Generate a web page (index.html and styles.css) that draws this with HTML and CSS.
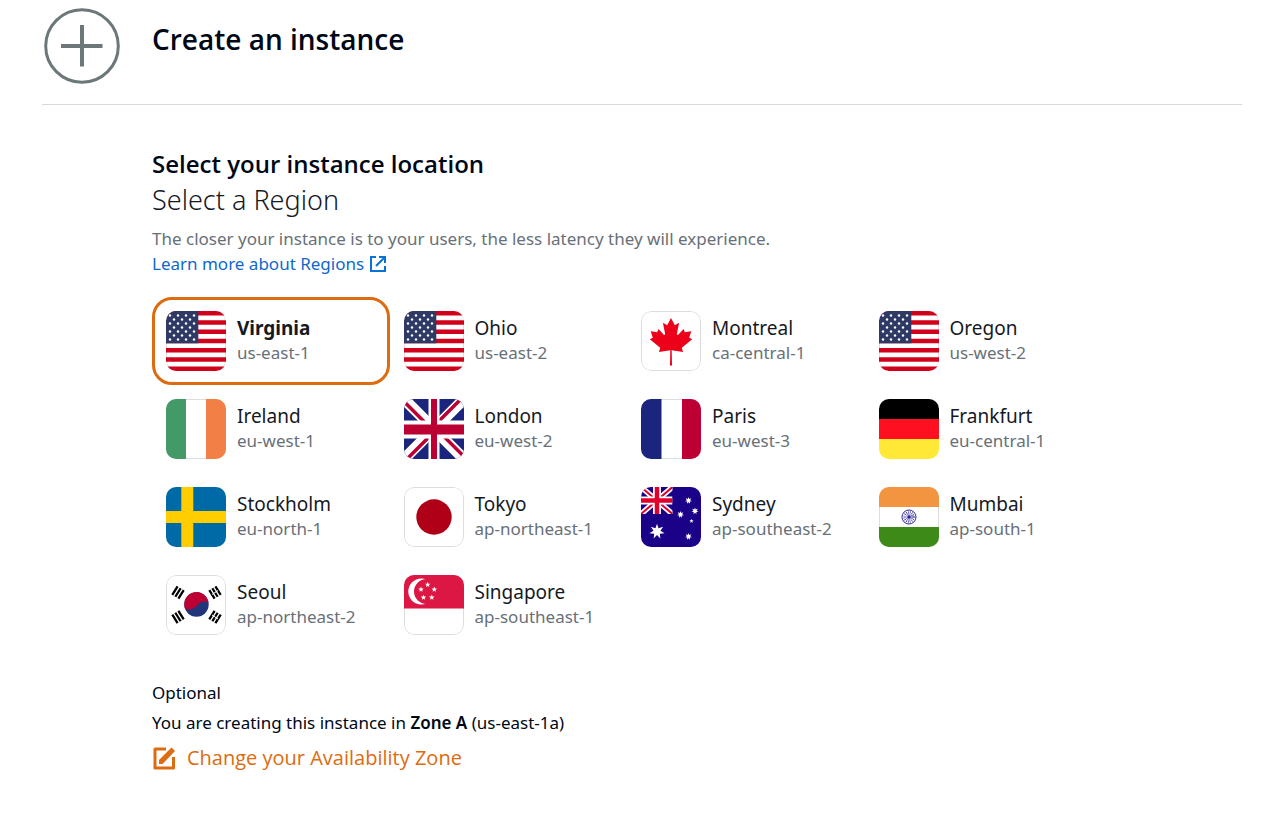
FILE: index.html
```
<!DOCTYPE html>
<html lang="en">
<head>
<meta charset="utf-8">
<meta name="viewport" content="width=device-width, initial-scale=1">
<title>Create an instance</title>
<link rel="stylesheet" href="styles.css">
</head>
<body>
<svg class="defs" aria-hidden="true">
  <defs>
    <pattern id="stars" x="2" y="2" width="8" height="8" patternUnits="userSpaceOnUse">
      <circle cx="2" cy="2.5" r="1.2" fill="#fff"/><circle cx="6" cy="6.5" r="1.2" fill="#fff"/>
    </pattern>
    <polygon id="star5" points="0,-1 .25,-.32 .95,-.31 .4,.13 .59,.81 0,.42 -.59,.81 -.4,.13 -.95,-.31 -.25,-.32"/>
    <polygon id="star7" points="0,-1 .2,-.42 .78,-.62 .45,-.1 .97,.22 .36,.28 .43,.9 0,.46 -.43,.9 -.36,.28 -.97,.22 -.45,-.1 -.78,-.62 -.2,-.42"/>
    <g id="bars"><path d="M-3.6-5V5M0-5V5M3.6-5V5" stroke="#000" stroke-width="2.3"/></g>
    <rect id="blank" x=".5" y=".5" width="59" height="59" rx="9.5" fill="#fff" stroke="#ddd"/>
  </defs>
  <symbol id="us" viewBox="0 0 60 60">
    <use href="#blank"/>
    <path d="M0 2.3H60M0 11.5H60M0 20.8H60M0 30H60M0 39.3H60M0 48.5H60M0 57.7H60" stroke="#d0021b" stroke-width="4.6"/>
    <rect width="32.3" height="32.3" fill="#2e3a65"/>
    <rect x="2" y="2" width="28" height="28" fill="url(#stars)"/>
  </symbol>
  <symbol id="ca" viewBox="0 0 60 60">
    <use href="#blank"/>
    <path fill="#ed0019" d="M30 7l-3.8 7.3-4.3-2.5 2.3 11.5-1.2.6-5.5-5.8-1.4 3.1-6.4-1 2.1 6.5-3 1.6 10.4 8.5-1.2 4.3 11.3-1.8-.3 15.3h2l-.3-15.3 11.3 1.8-1.2-4.3 10.4-8.5-3-1.6 2.1-6.5-6.4 1-1.4-3.1-5.5 5.8-1.2-.6 2.3-11.5-4.3 2.5z"/>
  </symbol>
  <symbol id="ie" viewBox="0 0 60 60">
    <use href="#blank"/><rect width="20" height="60" fill="#439a66"/><rect x="40" width="20" height="60" fill="#f17f46"/>
  </symbol>
  <symbol id="gb" viewBox="0 0 60 60">
    <rect width="60" height="60" fill="#1b257d"/>
    <path d="M0 0L60 60M60 0L0 60" stroke="#fff" stroke-width="11"/>
    <path d="M-1 1.5L29 31.500M58 -1L29 28M31 28.500L61 58.500M31 32L2 61" stroke="#bd0034" stroke-width="3.500"/>
    <path d="M30 0V60" stroke="#fff" stroke-width="11"/><path d="M0 30.500H60" stroke="#fff" stroke-width="18"/>
    <path d="M30 0V60" stroke="#bd0034" stroke-width="6"/><path d="M0 30.500H60" stroke="#bd0034" stroke-width="10"/>
  </symbol>
  <symbol id="fr" viewBox="0 0 60 60">
    <use href="#blank"/><rect width="20.500" height="60" fill="#1b257d"/><rect x="41" width="19" height="60" fill="#bd0034"/>
  </symbol>
  <symbol id="de" viewBox="0 0 60 60">
    <rect width="60" height="20" fill="#000"/><rect y="20" width="60" height="20" fill="#ff1020"/><rect y="40" width="60" height="20" fill="#ffe936"/>
  </symbol>
  <symbol id="se" viewBox="0 0 60 60">
    <rect width="60" height="60" fill="#006aa7"/><path d="M21.300 0V60M0 30H60" stroke="#ffcd00" stroke-width="12"/>
  </symbol>
  <symbol id="jp" viewBox="0 0 60 60">
    <use href="#blank"/><circle cx="30" cy="30" r="17.700" fill="#b00017"/>
  </symbol>
  <symbol id="au" viewBox="0 0 60 60">
    <rect width="60" height="60" fill="#1b0088"/>
    <svg width="31.500" height="27" viewBox="0 0 31.500 27">
      <path d="M0 0L31.500 27M31.500 0L0 27" stroke="#fff" stroke-width="5.500"/>
      <path d="M0 0L31.500 27M31.500 0L0 27" stroke="#e0002b" stroke-width="2"/>
      <path d="M16 0V27M0 13.500H31.500" stroke="#fff" stroke-width="8"/>
      <path d="M16 0V27M0 13.500H31.500" stroke="#e0002b" stroke-width="4.500"/>
    </svg>
    <g fill="#fff">
      <use href="#star7" transform="translate(16 44.500) scale(7.800)"/>
      <use href="#star7" transform="translate(47.500 13.500) scale(3.600)"/>
      <use href="#star7" transform="translate(54 24) scale(3.600)"/>
      <use href="#star7" transform="translate(39.500 27.500) scale(3.600)"/>
      <use href="#star5" transform="translate(50.500 34) scale(2.200)"/>
      <use href="#star7" transform="translate(47.500 49.500) scale(3.600)"/>
    </g>
  </symbol>
  <symbol id="in" viewBox="0 0 60 60">
    <use href="#blank"/><rect width="60" height="20" fill="#f29440"/><rect y="40" width="60" height="20" fill="#3d8a18"/>
    <g fill="none" stroke="#2d2593">
      <circle cx="30" cy="30" r="7"/>
      <circle cx="30" cy="30" r="3.500" stroke-width="4.500" stroke-dasharray=".5 .9"/>
    </g>
    <circle cx="30" cy="30" r="1.700" fill="#2d2593"/>
  </symbol>
  <symbol id="kr" viewBox="0 0 60 60">
    <use href="#blank"/>
    <circle cx="30.500" cy="29.500" r="12.200" fill="#20357a"/>
    <path fill="#bd0034" d="M19.300 34.200A12.200 12.200 0 1 1 42.500 27.500C38 25.500 34.500 26.500 31.500 30C28.500 34 23.500 35 19.300 34.200z"/>
    <use href="#bars" transform="translate(12 17.500) rotate(32)"/>
    <use href="#bars" transform="translate(49 17.500) rotate(-32)"/>
    <use href="#bars" transform="translate(12 42) rotate(-32)"/>
    <use href="#bars" transform="translate(49 42) rotate(32)"/>
    <path d="M46 19.500l6-4M46 40l6 4" stroke="#fff" stroke-width="1" fill="none"/>
  </symbol>
  <symbol id="sg" viewBox="0 0 60 60">
    <use href="#blank"/><rect width="60" height="33.500" fill="#dc1743"/>
    <circle cx="17.300" cy="16.500" r="13" fill="#fff"/><circle cx="22.500" cy="16.500" r="12.500" fill="#dc1743"/>
    <g fill="#fff">
      <use href="#star5" transform="translate(23.700 9.700) scale(2.900)"/>
      <use href="#star5" transform="translate(17 14.500) scale(2.900)"/>
      <use href="#star5" transform="translate(30.300 14.500) scale(2.900)"/>
      <use href="#star5" transform="translate(19.500 22.500) scale(2.900)"/>
      <use href="#star5" transform="translate(27.800 22.500) scale(2.900)"/>
    </g>
  </symbol>
</svg>

<div class="page">
  <header class="header">
    <svg class="plus" viewBox="0 0 76 76" aria-hidden="true"><circle cx="38" cy="38" r="36.300"/><path d="M38 17V58.500M17 38H58.500" stroke-width="4"/></svg>
    <h1 class="title">Create an instance</h1>
  </header>

  <main class="content">
    <h2 class="section-title">Select your instance location</h2>
    <h3 class="subtitle">Select a Region</h3>
    <p class="hint">The closer your instance is to your users, the less latency they will experience.</p>
    <a class="learn" href="#regions">Learn more about Regions
      <svg class="external" viewBox="0 0 16 16" aria-hidden="true"><path d="M6 1H1V15H15V10M9 1H15V7M14.500 1.500L6 10"/></svg>
    </a>

    <div class="regions" id="regions" role="radiogroup" aria-label="Region">
      <label class="region"><input class="radio" type="radio" name="region" checked><svg class="flag"><use href="#us"/></svg><span class="text"><span class="name">Virginia</span><span class="code">us-east-1</span></span></label>
      <label class="region"><input class="radio" type="radio" name="region"><svg class="flag"><use href="#us"/></svg><span class="text"><span class="name">Ohio</span><span class="code">us-east-2</span></span></label>
      <label class="region"><input class="radio" type="radio" name="region"><svg class="flag"><use href="#ca"/></svg><span class="text"><span class="name">Montreal</span><span class="code">ca-central-1</span></span></label>
      <label class="region"><input class="radio" type="radio" name="region"><svg class="flag"><use href="#us"/></svg><span class="text"><span class="name">Oregon</span><span class="code">us-west-2</span></span></label>
      <label class="region"><input class="radio" type="radio" name="region"><svg class="flag"><use href="#ie"/></svg><span class="text"><span class="name">Ireland</span><span class="code">eu-west-1</span></span></label>
      <label class="region"><input class="radio" type="radio" name="region"><svg class="flag"><use href="#gb"/></svg><span class="text"><span class="name">London</span><span class="code">eu-west-2</span></span></label>
      <label class="region"><input class="radio" type="radio" name="region"><svg class="flag"><use href="#fr"/></svg><span class="text"><span class="name">Paris</span><span class="code">eu-west-3</span></span></label>
      <label class="region"><input class="radio" type="radio" name="region"><svg class="flag"><use href="#de"/></svg><span class="text"><span class="name">Frankfurt</span><span class="code">eu-central-1</span></span></label>
      <label class="region"><input class="radio" type="radio" name="region"><svg class="flag"><use href="#se"/></svg><span class="text"><span class="name">Stockholm</span><span class="code">eu-north-1</span></span></label>
      <label class="region"><input class="radio" type="radio" name="region"><svg class="flag"><use href="#jp"/></svg><span class="text"><span class="name">Tokyo</span><span class="code">ap-northeast-1</span></span></label>
      <label class="region"><input class="radio" type="radio" name="region"><svg class="flag"><use href="#au"/></svg><span class="text"><span class="name">Sydney</span><span class="code">ap-southeast-2</span></span></label>
      <label class="region"><input class="radio" type="radio" name="region"><svg class="flag"><use href="#in"/></svg><span class="text"><span class="name">Mumbai</span><span class="code">ap-south-1</span></span></label>
      <label class="region"><input class="radio" type="radio" name="region"><svg class="flag"><use href="#kr"/></svg><span class="text"><span class="name">Seoul</span><span class="code">ap-northeast-2</span></span></label>
      <label class="region"><input class="radio" type="radio" name="region"><svg class="flag"><use href="#sg"/></svg><span class="text"><span class="name">Singapore</span><span class="code">ap-southeast-1</span></span></label>
    </div>

    <p class="note">Optional</p>
    <p class="note">You are creating this instance in <strong class="zone">Zone A</strong> (us-east-1a)</p>
    <button class="change" type="button">
      <svg class="edit" viewBox="0 0 24 24" aria-hidden="true"><path d="M14 3H3V22H21.500V11" fill="none" stroke="currentColor" stroke-width="3" stroke-linejoin="round"/><path d="M7 18V14L19.500 1.500L23 5L10.500 18z" fill="currentColor"/></svg>
      Change your Availability Zone
    </button>
  </main>
</div>
</body>
</html>
```
FILE: styles.css
```
* { box-sizing: border-box; }
body {
  margin: 0;
  background: #fff;
  color: #16191f;
  font-family: "Noto Sans", "Open Sans", sans-serif;
  font-size: 17px;
  line-height: 24px;
}
h1, h2, h3, p { margin: 0; }
.defs { position: absolute; width: 0; height: 0; }
.page { padding: 0 27px 0 42px; }
.header {
  display: flex;
  align-items: flex-start;
  gap: 32px;
  padding: 8px 0 20px 2px;
  border-bottom: 1px solid #d5dbdb;
}
.plus { width: 76px; height: 76px; fill: none; stroke: #6b7778; stroke-width: 3; }
.title, .section-title, .change { font-family: "Open Sans", "Noto Sans", sans-serif; }
.title { padding-top: 11px; font-size: 28px; line-height: 40px; font-weight: 600; color: #000716; }
.content { padding: 41px 140px 0 110px; }
.section-title { font-size: 24px; line-height: 36px; font-weight: 600; color: #000716; }
.subtitle { font-size: 27px; line-height: 36px; font-weight: 300; }
.hint { padding-top: 9px; color: #687078; }
.learn { display: flex; align-items: center; gap: 6px; color: #0f68cc; line-height: 26px; text-decoration: none; }
.external { width: 16px; height: 16px; fill: none; stroke: #0972d3; stroke-width: 2; }
.regions {
  display: grid;
  grid-template-columns: repeat(4, minmax(0, 1fr));
  grid-auto-rows: 88px;
  padding-top: 20px;
}
.region {
  position: relative;
  display: flex;
  gap: 11px;
  padding: 11px;
  border: 3px solid transparent;
  border-radius: 20px;
  cursor: pointer;
}
.region:has(.radio:checked) { border-color: #dd6b10; }
.radio { position: absolute; opacity: 0; margin: 0; }
.flag { flex: none; width: 60px; height: 60px; border-radius: 10px; }
.text { display: flex; flex-direction: column; padding-top: 5px; }
.name { font-size: 19px; line-height: 25px; }
.radio:checked ~ .text .name { font-weight: 700; }
.code { line-height: 24px; color: #687078; }
.note { padding-bottom: 6px; color: #000716; }
.regions + .note { padding-top: 32px; }
.zone { font-weight: 600; }
.change {
  display: flex;
  align-items: center;
  gap: 11px;
  padding: 2px 0 0;
  border: 0;
  background: none;
  color: #dd6b10;
  font-size: 20px;
  line-height: 30px;
  cursor: pointer;
}
.edit { width: 24px; height: 24px; }
```
